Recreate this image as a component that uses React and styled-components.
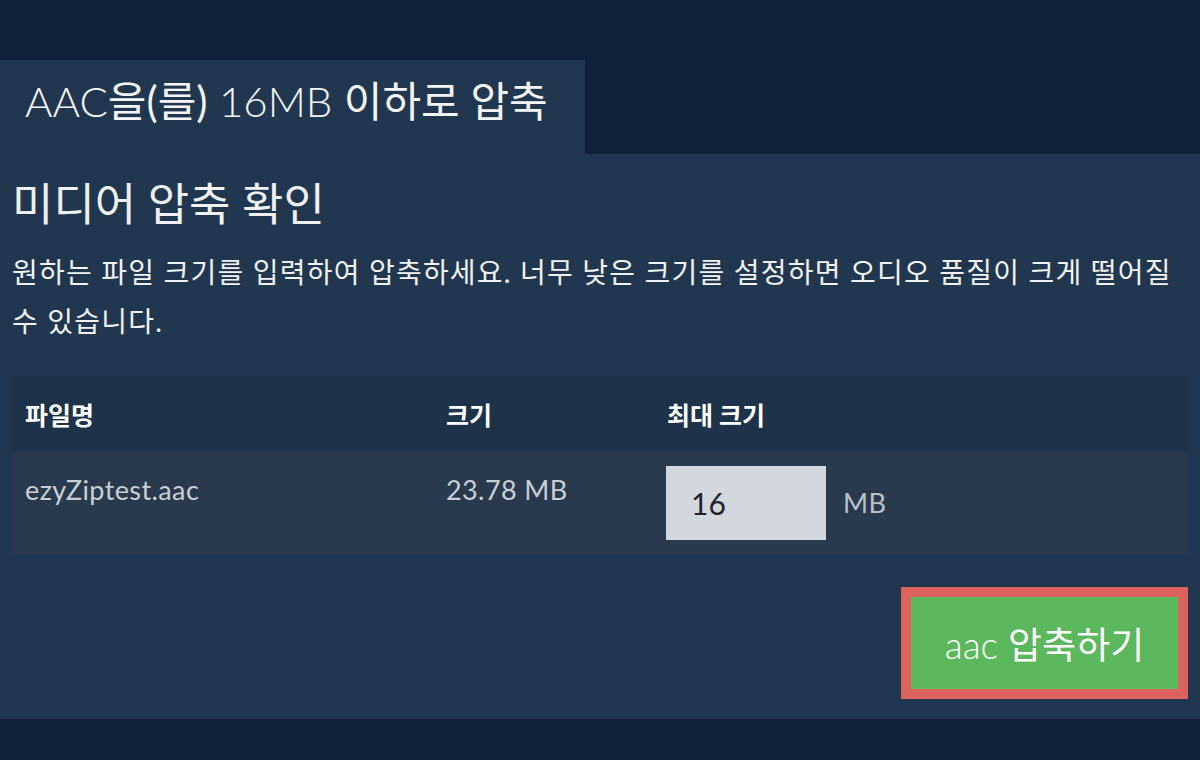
import React from "react"
import styled, { createGlobalStyle } from "styled-components"

const GlobalStyle = createGlobalStyle`
  html, body {
    margin: 0;
    padding: 0;
    background: #0f2239;
  }
  body {
    font-family: Lato, "Noto Sans CJK KR", sans-serif;
    color: #f2f2f2;
  }
`

const Page = styled.div`
  width: 1200px;
  height: 760px;
  padding-top: 60px;
  box-sizing: border-box;
  background: #0f2239;
`

const Tab = styled.h1`
  margin: 0;
  width: 585px;
  height: 94px;
  box-sizing: border-box;
  padding: 15px 0 0 25px;
  background: #213750;
  font-size: 42px;
  font-weight: 300;
  line-height: 52px;
  color: #f4f4f4;
  white-space: nowrap;
`

const Panel = styled.section`
  background: #213750;
  padding: 20px 12px 20px 12px;
  display: flex;
  flex-direction: column;
`

const Title = styled.h2`
  margin: 0;
  font-size: 45px;
  font-weight: 400;
  line-height: 60px;
  color: #f0f0f0;
`

const Description = styled.p`
  margin: 14px 0 0 0;
  font-size: 28px;
  line-height: 49px;
  letter-spacing: 1.2px;
  word-break: keep-all;
  color: #f2f2f2;
`

const Table = styled.div`
  margin-top: 30px;
  display: grid;
  grid-template-columns: 421px 221px 1fr;
`

const HeadCell = styled.div`
  background: #1e3249;
  height: 75px;
  display: flex;
  align-items: center;
  padding-left: 13px;
  font-size: 25px;
  font-weight: 700;
  color: #ffffff;
`

const BodyCell = styled.div`
  background: #2a3a4e;
  height: 103px;
  box-sizing: border-box;
  padding: ${(p) => (p.$input ? "15px 0 0 12px" : "24px 0 0 13px")};
  font-size: 27px;
  line-height: 30px;
  letter-spacing: 0.4px;
  color: #c9ced5;
  display: ${(p) => (p.$input ? "flex" : "block")};
  align-items: flex-start;
  gap: 17px;
`

const SizeInput = styled.input`
  width: 160px;
  height: 74px;
  box-sizing: border-box;
  border: none;
  outline: none;
  background: #d1d7dd;
  padding: 0 0 0 25px;
  font-family: Lato, sans-serif;
  font-size: 30px;
  color: #1f2530;
  margin: 0;
`

const Unit = styled.span`
  font-size: 27px;
  line-height: 74px;
  color: #b9c0c8;
`

const Actions = styled.div`
  display: flex;
  justify-content: flex-end;
  margin-top: 33px;
`

const CompressButton = styled.button`
  width: 287px;
  height: 112px;
  box-sizing: border-box;
  border: 10px solid #dc625e;
  background: #5cb85c;
  color: #ffffff;
  font-family: Lato, "Noto Sans CJK KR", sans-serif;
  font-size: 37px;
  font-weight: 300;
  cursor: pointer;
  padding: 0;
`

const Ext = styled.span`
  font-weight: 300;
`

const Kr = styled.span`
  font-weight: 400;
`

const App = () => (
  <Page>
    <GlobalStyle />
    <Tab>
      AAC<Kr>을(를)</Kr> 16MB <Kr>이하로 압축</Kr>
    </Tab>
    <Panel>
      <Title>미디어 압축 확인</Title>
      <Description>
        원하는 파일 크기를 입력하여 압축하세요. 너무 낮은 크기를 설정하면 오디오 품질이 크게 떨어질 수 있습니다.
      </Description>
      <Table>
        <HeadCell>파일명</HeadCell>
        <HeadCell>크기</HeadCell>
        <HeadCell>최대 크기</HeadCell>
        <BodyCell>ezyZiptest.aac</BodyCell>
        <BodyCell>23.78 MB</BodyCell>
        <BodyCell $input>
          <SizeInput type="text" defaultValue="16" />
          <Unit>MB</Unit>
        </BodyCell>
      </Table>
      <Actions>
        <CompressButton>
          <Ext>aac</Ext> <Kr>압축하기</Kr>
        </CompressButton>
      </Actions>
    </Panel>
  </Page>
)

export default App
